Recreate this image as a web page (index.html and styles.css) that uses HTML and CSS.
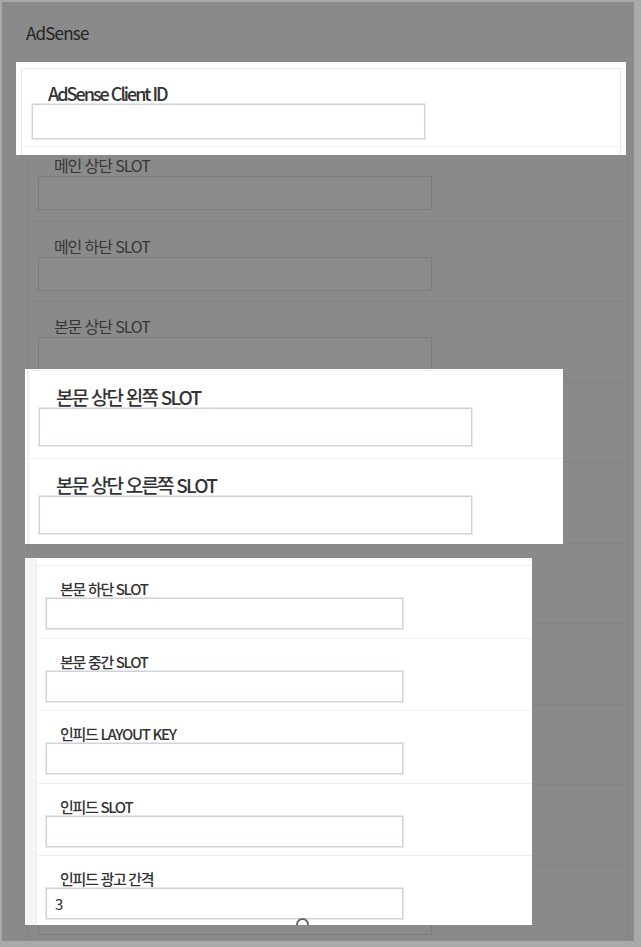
FILE: index.html
```
<!DOCTYPE html>
<html lang="ko">

<head>
  <meta charset="UTF-8">
  <meta name="viewport" content="width=device-width, initial-scale=1.0">
  <title>AdSense 설정</title>
  <link rel="stylesheet" href="styles.css">
</head>

<body>
  <div class="screen">
    <h2 class="title">AdSense</h2>

    <!-- dimmed form underneath; rows under a highlight keep their label hidden -->
    <div class="form">
      <div class="row first covered"><label class="label">AdSense Client ID</label><input class="field" type="text"></div>
      <div class="row"><label class="label">메인 상단 SLOT</label><input class="field" type="text"></div>
      <div class="row"><label class="label">메인 하단 SLOT</label><input class="field" type="text"></div>
      <div class="row"><label class="label">본문 상단 SLOT</label><input class="field" type="text"></div>
      <div class="row covered"><label class="label">본문 상단 왼쪽 SLOT</label><input class="field" type="text"></div>
      <div class="row covered"><label class="label">본문 상단 오른쪽 SLOT</label><input class="field" type="text"></div>
      <div class="row covered"><label class="label">본문 하단 SLOT</label><input class="field" type="text"></div>
      <div class="row covered"><label class="label">본문 중간 SLOT</label><input class="field" type="text"></div>
      <div class="row covered"><label class="label">인피드 LAYOUT KEY</label><input class="field" type="text"></div>
      <div class="row covered"><label class="label">인피드 SLOT</label><input class="field" type="text"></div>
      <div class="row covered"><label class="label">인피드 광고 간격</label><input class="field" type="text"></div>
    </div>

    <!-- highlighted crops -->
    <div class="spot spot-client">
      <div class="card">
        <div class="item">
          <label class="label">AdSense Client ID</label>
          <input class="field" type="text">
        </div>
      </div>
    </div>

    <div class="spot spot-top">
      <div class="card">
        <div class="item">
          <label class="label">본문 상단 왼쪽 SLOT</label>
          <input class="field" type="text">
        </div>
        <div class="item">
          <label class="label">본문 상단 오른쪽 SLOT</label>
          <input class="field" type="text">
        </div>
      </div>
    </div>

    <div class="spot spot-body">
      <div class="card">
        <div class="item">
          <label class="label">본문 하단 SLOT</label>
          <input class="field" type="text">
        </div>
        <div class="item">
          <label class="label">본문 중간 SLOT</label>
          <input class="field" type="text">
        </div>
        <div class="item">
          <label class="label">인피드 LAYOUT KEY</label>
          <input class="field" type="text">
        </div>
        <div class="item">
          <label class="label">인피드 SLOT</label>
          <input class="field" type="text">
        </div>
        <div class="item">
          <label class="label">인피드 광고 간격</label>
          <input class="field" type="text" value="3">
        </div>
      </div>
      <span class="handle"></span>
    </div>
  </div>
</body>

</html>
```

FILE: styles.css
```
* {
  box-sizing: border-box;
}

body {
  margin: 0;
  background: #a9a9a9;
  font-family: "Noto Sans CJK KR", "Noto Sans", sans-serif;
}

.screen {
  position: relative;
  margin: 2px 7px 6px 2px;
  height: 939px;
  background: #8a8a8a;
  overflow: hidden;
}

.title {
  margin: 0;
  height: 60px;
  padding: 21px 0 0 24px;
  font-size: 17px;
  line-height: 20px;
  font-weight: normal;
  letter-spacing: -0.8px;
  color: #232323;
}

.label {
  display: block;
  color: #333;
  white-space: nowrap;
}

.field {
  display: block;
  padding: 0 8px;
  font-family: inherit;
  outline: none;
}

/* dimmed form */
.form {
  margin-left: 25px;
  width: 602px;
  border: 1px solid #848484;
  border-bottom: 0;
}

.form .row {
  height: 80.5px;
  padding-top: 15px;
  border-bottom: 1px solid #848484;
}

.form .row.first {
  height: 78px;
  padding-top: 13px;
}

.form .row.covered .label {
  visibility: hidden;
}

.form .label {
  padding-left: 26px;
  font-size: 16px;
  line-height: 19px;
  letter-spacing: -1.1px;
  color: #363636;
}

.form .field {
  margin: 1px 0 0 10px;
  width: 394px;
  height: 34px;
  border: 1px solid #7b7b7b;
  background: #8b8b8b;
}

/* highlighted crops */
.spot {
  position: absolute;
  background: #fff;
  overflow: hidden;
}

.spot .label {
  font-weight: 500;
}

.spot .item {
  border-bottom: 1px solid #eef0f3;
}

.spot .field {
  border: 1px solid #cdd2db;
  box-shadow: 0 0 0 1px #e6e9ee;
  background: #fff;
  color: #333;
}

.spot-client {
  left: 14px;
  top: 60px;
  width: 610px;
  height: 93px;
  padding: 6px 0 0 5px;
}

.spot-client .card {
  width: 600px;
  height: 100px;
  border: 1px solid #e6e9ee;
}

.spot-client .item {
  height: 78px;
  padding-top: 14px;
}

.spot-client .label {
  padding-left: 26px;
  font-size: 18px;
  line-height: 20px;
  margin-bottom: 1px;
  letter-spacing: -2px;
}

.spot-client .field {
  margin-left: 10px;
  width: 393px;
  height: 35px;
}

.spot-top {
  left: 23px;
  top: 367px;
  width: 538px;
  height: 175px;
  padding: 1px 0 0 2px;
}

.spot-top .card {
  height: 200px;
  border-left: 2px solid #eef0f3;
  border-top: 1px solid #f1f2f5;
}

.spot-top .item {
  height: 88px;
  padding-top: 16px;
}

.spot-top .label {
  padding-left: 27px;
  font-size: 19px;
  line-height: 20px;
  margin-bottom: 1px;
  letter-spacing: -1.8px;
}

.spot-top .field {
  margin-left: 10px;
  width: 433px;
  height: 38px;
}

.spot-body {
  left: 23px;
  top: 556px;
  width: 507px;
  height: 367px;
  padding-left: 11px;
  background: linear-gradient(to right, #f4f5f7 11px, #fff 11px);
}

.spot-body .card {
  height: 400px;
  background: #fff;
  border-left: 1px solid #e6e9ee;
  border-top: 7px solid #fff;
}

.spot-body .card::before {
  content: "";
  display: block;
  border-top: 1px solid #eef0f3;
}

.spot-body .item {
  height: 72.6px;
  padding-top: 14px;
}

.spot-body .label {
  padding-left: 23px;
  font-size: 15px;
  line-height: 17px;
  margin-bottom: 1px;
  letter-spacing: -1.3px;
}

.spot-body .field {
  margin-left: 9px;
  width: 357px;
  height: 31px;
  font-size: 15px;
}

.spot-body .handle {
  position: absolute;
  left: 271px;
  top: 360px;
  width: 13px;
  height: 13px;
  border: 2px solid #666;
  border-radius: 50%;
}
```
